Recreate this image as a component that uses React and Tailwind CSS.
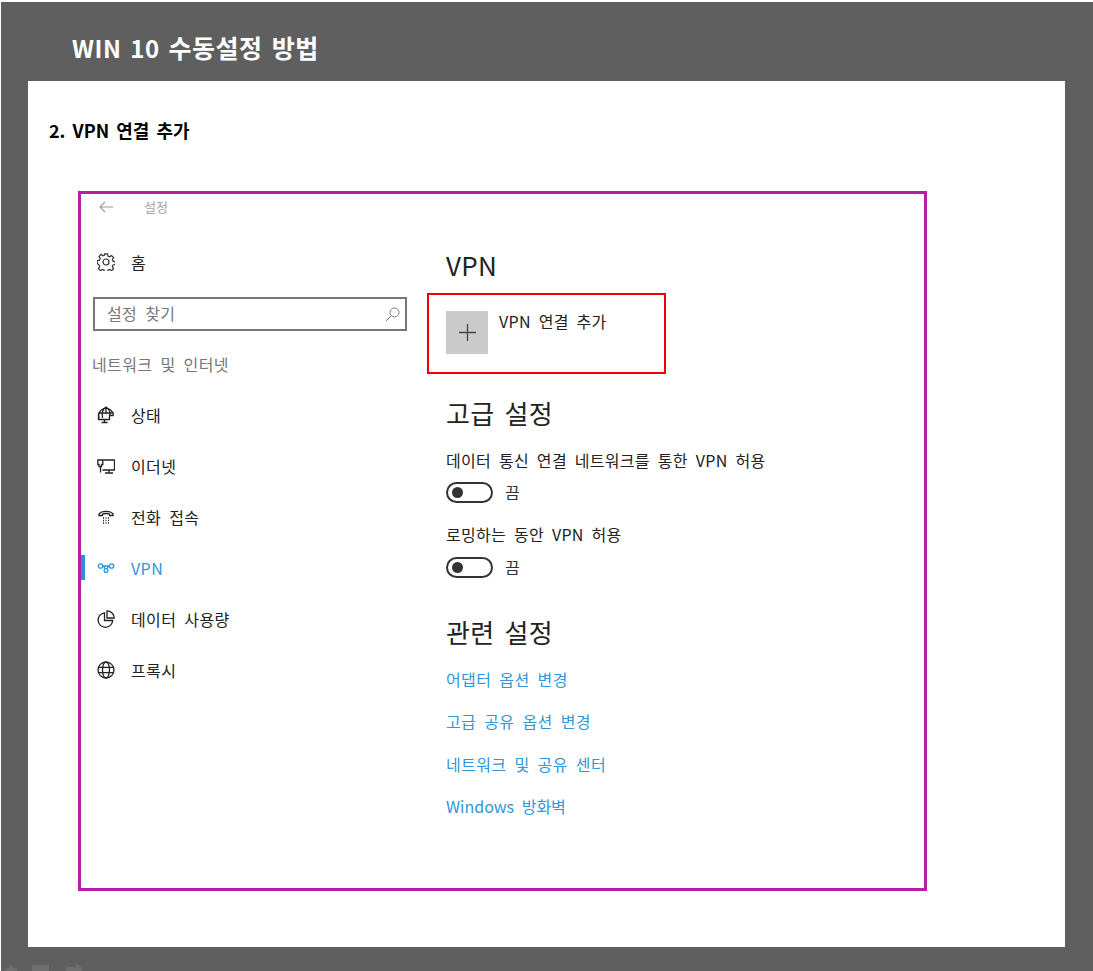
import React from 'react';

const font = { fontFamily: '"Noto Sans CJK KR", "Noto Sans", sans-serif' };

const GearIcon = () => (
  <svg width="18" height="18" viewBox="0 0 18 18" fill="none" stroke="#333" strokeWidth="1.2">
    <circle cx="9" cy="9" r="3" />
    <path d="M7.500.8h3l.4 2.300 1.700.7 1.900-1.300 2.100 2.100-1.300 1.900.7 1.700 2.300.4v3l-2.300.4-.7 1.700 1.300 1.900-2.100 2.100-1.900-1.300-1.700.7-.4 2.300h-3l-.4-2.300-1.700-.7-1.900 1.300-2.100-2.100 1.300-1.900-.7-1.700L.2 10.500v-3l2.300-.4.7-1.700-1.300-1.900 2.100-2.100 1.900 1.300 1.700-.7z" />
  </svg>
);

const StatusIcon = () => (
  <svg width="18" height="18" viewBox="0 0 18 18" fill="none" stroke="#222" strokeWidth="1.3">
    <path d="M2 12.500A7.500 7.500 0 1 1 16.500 9.500" />
    <path d="M1.500 7h15M9 1v5.500M5.500 12C4.500 7 6 3 9 1c3 2 4.500 5 3.800 8" />
    <path d="M1.500 7.500v6h11v-4h4" />
    <path d="M4.500 16.500h6M7.500 13.500v3" />
  </svg>
);

const EthernetIcon = () => (
  <svg width="18" height="18" viewBox="0 0 18 18" fill="none" stroke="#222" strokeWidth="1.3">
    <path d="M6.500 3h11v10H5.500M.8 3h5v4.500H4.500v2H2v-2H.8zM3.500 9.500v6M8 16h8M12 13v3" />
  </svg>
);

const DialIcon = () => (
  <svg width="18" height="18" viewBox="0 0 18 18" fill="none" stroke="#222" strokeWidth="1.300">
    <path d="M2 7.500V6C4.500 2.500 13.500 2.500 16 6v1.500h-3.500V6c-1.500-.7-5.500-.7-7 0v1.500z" />
    <path d="M6 10h1M8.500 10h1M11 10h1M6 12.500h1M8.500 12.500h1M11 12.500h1M6 15h1M8.500 15h1M11 15h1" />
  </svg>
);

const VpnIcon = () => (
  <svg width="18" height="18" viewBox="0 0 18 18" fill="none" stroke="#2f97d9" strokeWidth="1.300">
    <circle cx="3.500" cy="7" r="2.200" />
    <circle cx="14.500" cy="7" r="2.200" />
    <circle cx="9" cy="11.500" r="1.900" />
    <path d="M5.700 7c1.500 0 1.800 1 2 2.800M12.300 7c-1.500 0-1.800 1-2 2.800M5.700 7h6.600" />
  </svg>
);

const DataIcon = () => (
  <svg width="18" height="18" viewBox="0 0 18 18" fill="none" stroke="#222" strokeWidth="1.300">
    <path d="M7.500 2.800A7.300 7.300 0 1 0 15.700 10.500H7.500z" />
    <path d="M10 .8a7.300 7.300 0 0 1 7.200 7.200H10z" />
  </svg>
);

const GlobeIcon = () => (
  <svg width="18" height="18" viewBox="0 0 18 18" fill="none" stroke="#222" strokeWidth="1.300">
    <circle cx="9" cy="9" r="8" />
    <ellipse cx="9" cy="9" rx="3.500" ry="8" />
    <path d="M1.500 6.300h15M1.500 11.700h15" />
  </svg>
);

const navItems = [
  { label: '상태', icon: <StatusIcon /> },
  { label: '이더넷', icon: <EthernetIcon /> },
  { label: '전화 접속', icon: <DialIcon /> },
  { label: 'VPN', icon: <VpnIcon />, active: true },
  { label: '데이터 사용량', icon: <DataIcon /> },
  { label: '프록시', icon: <GlobeIcon /> },
];

const links = ['어댑터 옵션 변경', '고급 공유 옵션 변경', '네트워크 및 공유 센터', 'Windows 방화벽'];

const Toggle = () => (
  <div className="flex items-center h-[24px] gap-[12px]">
    <div className="flex items-center w-[47px] h-[21px] rounded-full border-2 border-[#333] pl-[4px]">
      <div className="w-[11px] h-[11px] rounded-full bg-[#333]" />
    </div>
    <span className="text-[16px] text-[#333]">끔</span>
  </div>
);

const App = () => {
  return (
    <div style={font} className="w-[1093px] h-[971px] bg-white pt-[2px] pl-[1px] overflow-hidden">
      <div className="w-[1092px] h-[969px] bg-[#5f5f5f]">
        {/* Title */}
        <div className="h-[79px] pl-[71px] pt-[26px]">
          <h1 className="text-[24px] leading-[38px] font-bold text-white tracking-[0.5px] [word-spacing:3px]">
            WIN 10 <span className="text-[25px]">수동설정 방법</span>
          </h1>
        </div>

        <div className="ml-[27px] w-[1037px] h-[866px] bg-white pt-[35px] pl-[21px]">
          <h2 className="text-[18px] leading-[28px] font-bold text-black [word-spacing:3px]">2. VPN 연결 추가</h2>

          {/* Settings screenshot */}
          <div className="mt-[47px] ml-[29px] w-[849px] h-[700px] border-[3px] border-[#b41fa5] flex flex-col">
            <div className="h-[26px] flex items-center pl-[18px]">
              <svg width="14" height="12" viewBox="0 0 14 12" fill="none" stroke="#999" strokeWidth="1.100">
                <path d="M14 6H1M6 1 1 6l5 5" />
              </svg>
              <span className="ml-[31px] text-[13px] text-[#a3a3a3]">설정</span>
            </div>

            <div className="flex text-[16px] tracking-[0.4px] [word-spacing:4px]">
              {/* Sidebar */}
              <div className="w-[365px] shrink-0">
                <div className="mt-[30px] h-[24px] flex items-center gap-[16px] pl-[16px]">
                  <GearIcon />
                  <span className="text-[#222]">홈</span>
                </div>
                <div className="mt-[23px] ml-[12px] w-[314px] h-[34px] border-2 border-[#777] flex items-center justify-between pl-[12px] pr-[5px]">
                  <span className="text-[#777] pb-[2px]">설정 찾기</span>
                  <svg width="15" height="15" viewBox="0 0 15 15" fill="none" stroke="#777" strokeWidth="1">
                    <circle cx="9.500" cy="5.500" r="4.500" />
                    <path d="M6.300 8.700 1 14" />
                  </svg>
                </div>
                <div className="mt-[20px] pl-[11px] h-[26px] flex items-center text-[#777]">네트워크 및 인터넷</div>
                <div className="mt-[12px] flex flex-col">
                  {navItems.map((item) => (
                    <div key={item.label} className="relative h-[51px] flex items-center gap-[16px] pl-[16px]">
                      {item.active && <div className="absolute left-0 top-[13px] w-[4px] h-[25px] bg-[#2f8fd6]" />}
                      {item.icon}
                      <span className={item.active ? 'text-[#2f97d9]' : 'text-[#222]'}>{item.label}</span>
                    </div>
                  ))}
                </div>
              </div>

              {/* Main column */}
              <div className="flex-1 tracking-[0.3px]">
                <div className="mt-[29px] h-[30px] flex items-center text-[26px] text-[#222]">VPN</div>
                <div className="mt-[14px] -ml-[19px] w-[239px] h-[81px] border-2 border-[#f00000] pl-[17px] pt-[16px] flex gap-[11px]">
                  <div className="w-[42px] h-[43px] bg-[#cacaca] flex items-center justify-center">
                    <svg width="17" height="17" viewBox="0 0 17 17" stroke="#444" strokeWidth="1.300">
                      <path d="M8.500 0v17M0 8.500h17" />
                    </svg>
                  </div>
                  <span className="leading-[20px] text-[#222]">VPN 연결 추가</span>
                </div>

                <div className="mt-[20px] h-[36px] flex items-center text-[26px] text-[#222]">고급 설정</div>
                <div className="mt-[18px] h-[24px] flex items-center text-[#222]">데이터 통신 연결 네트워크를 통한 VPN 허용</div>
                <div className="mt-[8px]"><Toggle /></div>
                <div className="mt-[18px] h-[24px] flex items-center text-[#222]">로밍하는 동안 VPN 허용</div>
                <div className="mt-[9px]"><Toggle /></div>

                <div className="mt-[34px] h-[36px] flex items-center text-[26px] text-[#222]">관련 설정</div>
                <div className="mt-[17px] flex flex-col gap-[17.67px]">
                  {links.map((link) => (
                    <div key={link} className={`h-[25px] flex items-center text-[#2f97d9] ${link.startsWith('Windows') ? 'tracking-normal' : 'tracking-[0.4px]'}`}>{link}</div>
                  ))}
                </div>
              </div>
            </div>
          </div>
        </div>

        {/* Faint toolbar icons cut off by the page edge */}
        <svg className="mt-[16px] ml-[3px]" width="80" height="8" viewBox="0 0 80 8" fill="#6f6f6f">
          <path d="M0 8 7 2l7 6z" />
          <path d="M28 2h17v6H28z" />
          <path d="M62 4h10V0l7 6-2 2H62z" />
        </svg>
      </div>
    </div>
  );
};

export default App;
